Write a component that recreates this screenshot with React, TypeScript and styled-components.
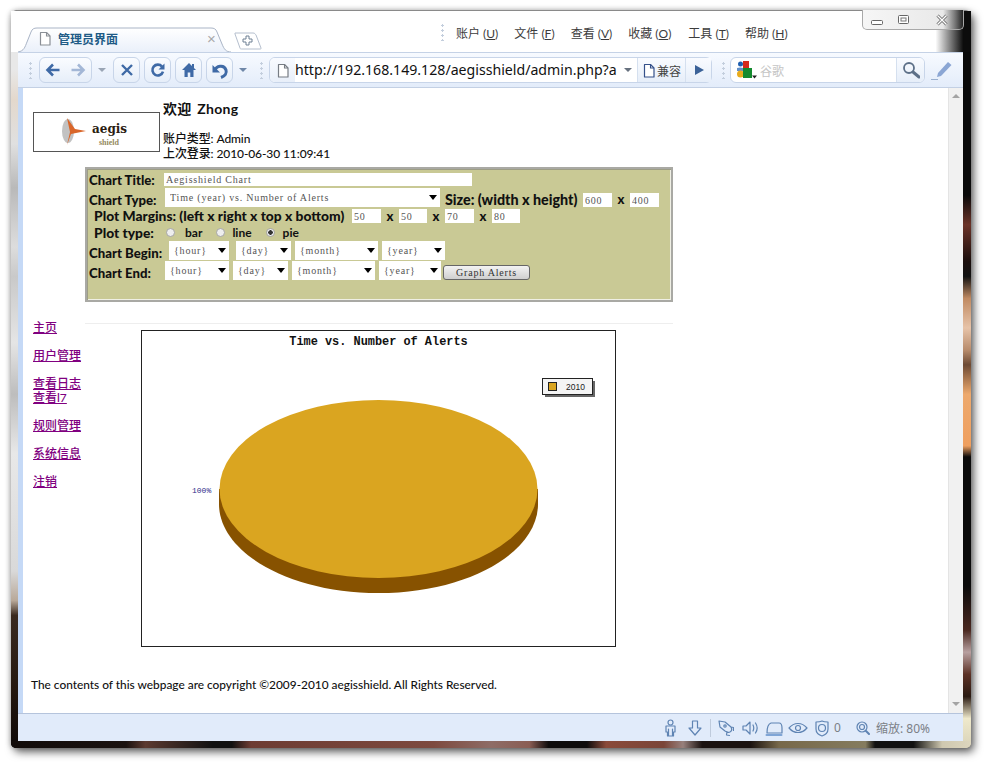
import React from "react";
import styled, { createGlobalStyle } from "styled-components";

const Global = createGlobalStyle`
  html, body { margin: 0; padding: 0; background: #fff; }
  body { font-family: "Lato", "Noto Sans CJK SC", sans-serif; }
  * { box-sizing: border-box; }
`;

const Screen = styled.div`
  width: 989px; height: 766px; padding: 10px 18px 18px 11px; overflow: hidden; background: #fff;
`;
const Win = styled.div`
  position: relative; width: 960px; height: 738px; padding: 0 8px 7px 7px; display: flex; flex-direction: column;
  border-top: 1px solid #8a8a8a; border-radius: 6px 6px 5px 5px;
  box-shadow: 3px 4px 9px rgba(0,0,0,.62), -1px 0 5px rgba(0,0,0,.2);
  background-color: #222;
  background-image:
    linear-gradient(to right, #120c0a 0, #1a1210 12%, #5c3a30 14%, #111 21%, #111 23%, #6d3c33 25%, #7d4a3f 44%, #8e6c66 50%, #8a5d54 54%, #0e0c0c 56%, #0e0c0c 60%, #8a4a3a 62%, #7a4538 68%, #97807c 70%, #1a1210 72%, #1a1210 77%, #77684a 80%, #857c5f 89%, #111 90%, #111 94%, #cfc8b0 97%, #ddd6be 100%),
    linear-gradient(to bottom, #e8e8e8 0, #e8e8e8 8%, #e3d8cc 12%, #e0e0e0 18%, #b9b9b9 24%, #ddd 32%, #c9c9c9 36%, #e5e5e5 45%, #bdbdbd 52%, #e8e8e8 60%, #d9d9d9 76%, #b8a898 80%, #3a2a20 82%, #24180f 92%, #0d0807 100%),
    linear-gradient(to bottom, #0a0a0a 0, #0a0a0a 25%, #6b3328 29%, #1a0e0c 34%, #111 36%, #c08a62 39%, #e7c3a8 43%, #b88c6c 46%, #6d4a34 48%, #eda96d 52%, #ef9f5f 59%, #0b0b0b 60.5%, #0b0b0b 78%, #4a2820 84%, #b8a0a0 87%, #5d3226 90%, #2a1a12 93%, #efe9cb 96%, #d8d2b8 100%);
  background-size: 100% 7px, 7px 100%, 8px 100%;
  background-position: left bottom, left top, right top;
  background-repeat: no-repeat;
`;

/* ---------- title strip ---------- */
const TitleStrip = styled.div`
  height: 41px; display: flex; position: relative; flex: none; margin: 0 -8px 0 -7px; padding-left: 7px;
  background: linear-gradient(to right, #fff 0, #fff 96.3%, #9a9a9a 97.5%, #0c0c0c 99.2%, #0c0c0c 100%);
`;
const Tab = styled.div`
  position: relative; width: 215px; height: 25px; margin-top: 16px; padding: 0 0 2px 20px;
  display: flex; align-items: center; flex: none;
`;
const TabShape = styled.svg`
  position: absolute; left: 0; top: 0; width: 215px; height: 25px;
`;
const TabIcon = styled.svg`
  position: relative; width: 14px; height: 15px; flex: none;
`;
const TabTitle = styled.span`
  position: relative; margin-left: 6px; font-size: 12px; font-weight: 700; color: #205b86; flex: 1;
`;
const TabClose = styled.span`
  position: relative; width: 10px; margin-right: 16px; font: 15px/15px "Liberation Sans", sans-serif; color: #a9a9a9;
`;
const NewTab = styled.svg`
  width: 28px; height: 18px; margin: 21px 0 0 1px; flex: none;
`;
const Menu = styled.div`
  display: flex; align-items: center; margin-left: 179px; height: 30px; margin-top: 6px;
`;
const VGrip = styled.i<{ $ml?: number; $h?: number }>`
  display: block; flex: none; width: 3px; height: ${p => p.$h ?? 18}px; margin-left: ${p => p.$ml ?? 0}px;
  background: radial-gradient(circle, #c3cedd 0 1px, transparent 1.2px) 0 0 / 3px 5px repeat-y;
`;
const MenuItem = styled.span<{ $ml: number }>`
  margin-left: ${p => p.$ml}px; font-size: 12px; color: #3c3c3c; white-space: nowrap;
  u { text-underline-offset: 1px; }
`;
const WinControls = styled.div`
  position: absolute; top: -1px; right: 7px; width: 102px; height: 20px; display: flex; align-items: center;
  border: 1px solid #a9a9a9; border-top: 0; border-radius: 0 0 5px 5px;
  background: linear-gradient(to right, #f6f6f6 0, #e9e9e9 80%, #777 92%, #222 100%);
`;
const WinIcon = styled.svg<{ $ml: number }>`
  width: 12px; height: 12px; flex: none; margin-left: ${p => p.$ml}px;
`;

/* ---------- toolbar ---------- */
const Toolbar = styled.div`
  height: 36px; flex: none; display: flex; align-items: center;
  border-top: 1px solid #c5d2e6; border-bottom: 1px solid #c3d0e4;
  background: linear-gradient(to bottom, #f7faff 0, #e3ecfa 100%);
`;
const NavGroup = styled.div<{ $ml?: number; $w?: number }>`
  display: flex; height: 26px; width: ${p => p.$w ?? 27}px; margin-left: ${p => p.$ml ?? 0}px; flex: none;
  align-items: center; justify-content: space-around;
  border: 1px solid #c8d5e9; border-radius: 6px; background: linear-gradient(to bottom, #fafcff, #e6eef9);
`;
const Glyph = styled.svg<{ $s?: number }>`
  width: ${p => p.$s ?? 16}px; height: ${p => p.$s ?? 16}px; flex: none; display: block;
`;
const Drop = styled.i<{ $ml: number; $c?: string }>`
  display: block; flex: none; width: 0; height: 0; margin-left: ${p => p.$ml}px;
  border: 4px solid transparent; border-top: 4px solid ${p => p.$c ?? "#9aa5b5"}; border-bottom: 0;
`;
const Address = styled.div`
  width: 443px; height: 26px; margin-left: 6px; flex: none; display: flex; align-items: center;
  border: 1px solid #c8d5e9; border-radius: 6px; background: #fff;
`;
const AddrIcon = styled.div`
  width: 25px; height: 24px; flex: none; display: flex; align-items: center; justify-content: center;
  background: linear-gradient(to bottom, #f9fbff, #e8eff9); border-radius: 5px 0 0 5px;
`;
const Url = styled.div`
  width: 322px; white-space: nowrap; flex: none;
  font: 14.15px/24px "Noto Sans", sans-serif; color: #111;
`;
const AddrBtn = styled.div<{ $w: number; $ml?: number }>`
  width: ${p => p.$w}px; height: 24px; flex: none; display: flex; align-items: center; justify-content: center; gap: 1px;
  margin-left: ${p => p.$ml ?? 0}px;
  border-left: 1px solid #d5e0ef; background: linear-gradient(to bottom, #f9fbff, #e6eef9);
  font-size: 12px; color: #444;
`;
const SearchBox = styled.div`
  width: 195px; height: 26px; margin-left: 5px; flex: none; display: flex; align-items: center;
  border: 1px solid #c8d5e9; border-radius: 6px; background: #fff;
`;
const Hint = styled.span`
  margin-left: 3px; flex: 1; font-size: 12px; color: #c4c4c4;
`;
const SearchBtn = styled.div`
  width: 28px; height: 24px; flex: none; display: flex; align-items: center; justify-content: center;
  border-left: 1px solid #d5e0ef; border-radius: 0 5px 5px 0; background: linear-gradient(to bottom, #f9fbff, #e6eef9);
`;
const Pen = styled.svg`
  width: 24px; height: 24px; margin-left: 5px; flex: none;
`;

/* ---------- content ---------- */
const Content = styled.div`
  flex: 1; min-height: 0; display: flex; background: #fff;
`;
const Edge = styled.div`
  width: 5px; flex: none; background: #c5d9f6;
`;
const Page = styled.div`
  flex: 1; min-width: 0; overflow: hidden; padding-left: 10px; color: #111; font-size: 12px;
`;
const Header = styled.div`
  display: flex; height: 79px;
`;
const LogoBox = styled.div`
  width: 127px; height: 40px; margin-top: 24px; border: 1px solid #555; flex: none;
  display: flex; align-items: center; justify-content: center;
`;
const UserInfo = styled.div`
  margin-left: 3px; padding-top: 12px; line-height: 15px;
`;
const Welcome = styled.h1`
  margin: 0 0 14px; font-size: 14px; line-height: 17px; font-weight: 700; color: #111; letter-spacing: .3px; word-spacing: 2px;
`;
const Line = styled.div`
  font-size: 12px; line-height: 15px; font-weight: 500; letter-spacing: -.1px;
`;

const fieldFont = `font: 10px "Liberation Serif", serif; letter-spacing: .8px; color: #555;`;

const ChartForm = styled.form`
  width: 588px; height: 135px; margin: 0 0 0 52px; padding: 3px 0 0 2px;
  background: #c9c995; border: 2px solid #a9a9a4;
  box-shadow: inset 1px 1px 0 #9d9d85, inset -1px -1px 0 #efefe4;
  font-weight: 900; font-size: 13.8px; color: #111;
`;
const Row = styled.div<{ $h: number; $pl?: number; $end?: boolean }>`
  display: flex; align-items: ${p => p.$end ? "flex-end" : "center"}; height: ${p => p.$h}px; padding-left: ${p => p.$pl ?? 0}px; white-space: nowrap;
  ${p => p.$end ? "> input, > span, > button { margin-bottom: 1px; }" : ""}
`;
const Label = styled.label<{ $w: number; $ml?: number; $fs?: number }>`
  flex: none; width: ${p => p.$w}px; line-height: 16px; margin-left: ${p => p.$ml ?? 0}px;
  font-size: ${p => p.$fs ?? 13.2}px;
`;
const TextBox = styled.input<{ $w: number; $ml?: number; $h?: number }>`
  width: ${p => p.$w}px; height: ${p => p.$h ?? 15}px; margin-left: ${p => p.$ml ?? 0}px; padding: 0 0 0 2px; flex: none;
  border: 0; background: #fff; outline: 0;
  ${fieldFont}
`;
const Times = styled.span<{ $w: number }>`
  width: ${p => p.$w}px; text-align: center; flex: none; font-size: 13px; line-height: 15px;
`;
const SelectWrap = styled.span<{ $w: number; $ml?: number; $h?: number }>`
  position: relative; display: block; flex: none; width: ${p => p.$w}px; height: ${p => p.$h ?? 19}px; margin-left: ${p => p.$ml ?? 0}px;
  &::after {
    content: ""; position: absolute; right: 3px; top: 50%; margin-top: -3px; width: 0; height: 0;
    border: 4px solid transparent; border-top: 5px solid #000; border-bottom: 0;
  }
`;
const Select = styled.select`
  appearance: none; display: block; width: 100%; height: 100%; padding: 0 0 0 5px; border: 0; border-radius: 0; background: #fff; outline: 0;
  ${fieldFont}
`;
const Radio = styled.input<{ $ml: number }>`
  appearance: none; flex: none; width: 9px; height: 9px; margin: 0 0 0 ${p => p.$ml}px;
  border: 1px solid #a5a5a5; border-radius: 50%; background: #eee;
  &:checked { background: radial-gradient(circle, #333 0 2px, #eee 2.5px); }
`;
const RadioText = styled.span<{ $ml: number }>`
  margin-left: ${p => p.$ml}px; font-weight: 700; font-size: 12px; flex: none;
`;
const GraphBtn = styled.button`
  width: 87px; height: 15px; margin-left: 2px; padding: 0; flex: none; border: 1px solid #666; border-radius: 3px;
  background: linear-gradient(to bottom, #f3f3f3, #cfcfcf);
  ${fieldFont}
  color: #333;
`;

const Body = styled.div`
  display: flex; margin-top: 19px;
`;
const SideNav = styled.nav`
  width: 52px; flex: none; display: flex; flex-direction: column; gap: 14px;
`;
const NavBlock = styled.div`
  display: flex; flex-direction: column;
`;
const NavLink = styled.a`
  font-size: 12px; line-height: 14px; color: #800080; text-decoration: underline; white-space: nowrap; font-weight: 500;
`;
const Main = styled.div`
  width: 588px; flex: none; padding-top: 2px;
`;
const Rule = styled.div`
  height: 1px; background: #eee;
`;
const ChartFrame = styled.svg`
  display: block; width: 475px; height: 317px; margin: 6px 0 0 56px;
`;
const Footer = styled.div`
  margin: 31px 0 0 -2px; font-size: 11.87px; line-height: 14px; font-weight: 500; white-space: nowrap; color: #111;
`;
const Scrollbar = styled.div`
  width: 15px; flex: none; display: flex; flex-direction: column; justify-content: space-between; align-items: center;
  padding: 6px 0 7px; background: #f1f1f1; border-left: 1px solid #e4e4e4;
`;
const ScrollUp = styled.i`
  width: 0; height: 0; border: 4px solid transparent; border-bottom: 4px solid #a4a4a4; border-top: 0;
`;
const ScrollDown = styled.i`
  width: 0; height: 0; border: 4px solid transparent; border-top: 4px solid #a4a4a4; border-bottom: 0;
`;

/* ---------- status ---------- */
const Status = styled.div`
  height: 28px; flex: none; display: flex; align-items: center; justify-content: flex-end; padding-right: 33px;
  border-top: 1px solid #b5c4dc; background: #e1ebfa; color: #7b7f86; font-size: 12px;
`;
const StatusIcon = styled.svg<{ $ml: number; $w?: number }>`
  width: ${p => p.$w ?? 16}px; height: 18px; margin-left: ${p => p.$ml}px; flex: none;
`;
const StatusDivider = styled.i<{ $ml: number }>`
  width: 1px; height: 18px; background: #bfcbdc; margin-left: ${p => p.$ml}px; flex: none;
`;
const StatusText = styled.span<{ $ml: number }>`
  margin-left: ${p => p.$ml}px; white-space: nowrap; flex: none; font-family: "Noto Sans", "Noto Sans CJK SC", sans-serif;
`;

const pageIcon = (c: string) => (
  <>
    <path d="M2.500 1.500h6l3.500 3.500v9H2.500z" fill="#fff" stroke={c} strokeWidth="1.200" strokeLinejoin="round" />
    <path d="M8.500 1.500v3.500h3.500" fill="none" stroke={c} strokeWidth="1.100" />
  </>
);
const blue = "#3f6aa6";

const Stroke: React.FC<React.PropsWithChildren> = ({ children }) => (
  <g fill="none" stroke="#5f84b3" strokeWidth="1.200" strokeLinecap="round" strokeLinejoin="round">{children}</g>
);

const DateSelect = ({ label, w, ml, h }: { label: string; w: number; ml?: number; h?: number }) => (
  <SelectWrap $w={w} $ml={ml} $h={h}>
    <Select defaultValue={label}><option>{label}</option></Select>
  </SelectWrap>
);

export default function App() {
  return (
    <Screen>
      <Global />
      <Win>
        <TitleStrip>
          <Tab>
            <TabShape viewBox="0 0 215 25">
              <defs>
                <linearGradient id="tabfill" x1="0" y1="0" x2="0" y2="1">
                  <stop offset="0" stopColor="#ffffff" />
                  <stop offset="1" stopColor="#eaf0fa" />
                </linearGradient>
              </defs>
              <path d="M0 25c6-1 7-5 9-10l4-10c1-3 3-4 6-4h174c3 0 5 1 6 4l5 12c2 5 4 8 9 8" fill="url(#tabfill)" stroke="#a9b4c6" strokeWidth="1" />
            </TabShape>
            <TabIcon viewBox="0 0 14 15">{pageIcon("#8a8f96")}</TabIcon>
            <TabTitle>管理员界面</TabTitle>
            <TabClose>×</TabClose>
          </Tab>
          <NewTab viewBox="0 0 28 18">
            <path d="M1 1h18c2 0 2 1 3 2l5 13c0 1 0 1-1 1H8c-1 0-2 0-2-1L1 2z" fill="#fff" stroke="#b5bfce" />
            <path d="M12 4h3v3h3v3h-3v3h-3v-3H9V7h3z" fill="#fff" stroke="#6f8094" strokeLinejoin="round" />
          </NewTab>
          <Menu>
            <VGrip />
            <MenuItem $ml={12}>账户 (<u>U</u>)</MenuItem>
            <MenuItem $ml={16}>文件 (<u>F</u>)</MenuItem>
            <MenuItem $ml={16}>查看 (<u>V</u>)</MenuItem>
            <MenuItem $ml={16}>收藏 (<u>O</u>)</MenuItem>
            <MenuItem $ml={17}>工具 (<u>T</u>)</MenuItem>
            <MenuItem $ml={16}>帮助 (<u>H</u>)</MenuItem>
          </Menu>
          <WinControls>
            <WinIcon $ml={8} viewBox="0 0 12 12"><rect x="0.500" y="6.500" width="11" height="4" rx="1" fill="#fff" stroke="#666" /></WinIcon>
            <WinIcon $ml={15} viewBox="0 0 12 12"><rect x="0.500" y="1.500" width="10" height="8" rx="1" fill="#fff" stroke="#666" /><rect x="3" y="4" width="5" height="3" fill="none" stroke="#777" /></WinIcon>
            <WinIcon $ml={26} viewBox="0 0 12 12"><path d="M1.500 1.500l9 9m0-9l-9 9" stroke="#666" strokeWidth="3" /><path d="M1.500 1.500l9 9m0-9l-9 9" stroke="#fff" strokeWidth="1.400" /></WinIcon>
          </WinControls>
        </TitleStrip>

        <Toolbar>
          <VGrip $ml={11} $h={18} />
          <NavGroup $ml={7} $w={53}>
            <Glyph viewBox="0 0 16 16"><path d="M8 2.500L2.500 8 8 13.500M3 8h11.500" fill="none" stroke={blue} strokeWidth="2.600" /></Glyph>
            <Glyph viewBox="0 0 16 16"><path d="M8 2.500L13.500 8 8 13.500M13 8H1.500" fill="none" stroke="#a3b7d6" strokeWidth="2.600" /></Glyph>
          </NavGroup>
          <Drop $ml={6} />
          <NavGroup $ml={7}>
            <Glyph viewBox="0 0 16 16"><path d="M3 3l10 10M13 3L3 13" stroke={blue} strokeWidth="2.400" /></Glyph>
          </NavGroup>
          <NavGroup $ml={4}>
            <Glyph viewBox="0 0 16 16"><path d="M13 9.600A5.400 5.400 0 1 1 12 4.600" fill="none" stroke={blue} strokeWidth="2.600" /><path d="M14.500 1.500v6h-6z" fill={blue} /></Glyph>
          </NavGroup>
          <NavGroup $ml={4}>
            <Glyph viewBox="0 0 16 16"><path d="M8 1L1 8h2.500v7h3.200v-4.500h2.600V15h3.200V8H15l-2-2V2h-2v2z" fill={blue} /></Glyph>
          </NavGroup>
          <NavGroup $ml={4}>
            <Glyph $s={18} viewBox="0 0 18 18"><path d="M4 9.500C5 5 13 3 15 9c1 3-1 6-5 7.500" fill="none" stroke={blue} strokeWidth="3" /><path d="M1.500 4v7.500H9z" fill={blue} /></Glyph>
          </NavGroup>
          <Drop $ml={6} $c="#6f87a8" />
          <VGrip $ml={13} $h={18} />
          <Address>
            <AddrIcon><TabIcon viewBox="0 0 14 15">{pageIcon("#777c84")}</TabIcon></AddrIcon>
            <Url>http://192.168.149.128/aegisshield/admin.php?a</Url>
            <Drop $ml={7} $c="#67717f" />
            <AddrBtn $w={48} $ml={5}>
              <TabIcon viewBox="0 0 14 15">{pageIcon("#34508a")}</TabIcon>兼容
            </AddrBtn>
            <AddrBtn $w={26}>
              <Glyph $s={14} viewBox="0 0 14 14"><path d="M3 2l9 5-9 5z" fill="#3b6298" /></Glyph>
            </AddrBtn>
          </Address>
          <VGrip $ml={10} $h={18} />
          <SearchBox>
            <Glyph $s={26} viewBox="0 0 26 24">
              <rect x="12" y="3" width="6" height="7" fill="#d42a1c" />
              <circle cx="9.500" cy="6" r="2.500" fill="#1f5fb0" />
              <path d="M6 10l3-.5 3 .5v3H6z" fill="#1f5fb0" opacity=".7" />
              <ellipse cx="9.500" cy="16" rx="3.500" ry="3.500" fill="#e8ab1c" />
              <rect x="12" y="10" width="9" height="10" fill="#138a2e" />
              <path d="M21 17.500h5l-2.500 3z" fill="#222" />
            </Glyph>
            <Hint>谷歌</Hint>
            <SearchBtn>
              <Glyph $s={18} viewBox="0 0 18 18"><circle cx="7" cy="7" r="5" fill="none" stroke="#5d7088" strokeWidth="1.800" /><path d="M11 11l6 5" stroke="#5d7088" strokeWidth="3" strokeLinecap="round" /></Glyph>
            </SearchBtn>
          </SearchBox>
          <Pen viewBox="0 0 24 24">
            <path d="M8 15L18 4l3.500 3L11 18l-4 1z" fill="#8ba6d4" />
            <path d="M1 21.500h7" stroke="#9ab0cf" strokeWidth="1" />
          </Pen>
        </Toolbar>

        <Content>
          <Edge />
          <Page>
            <Header>
              <LogoBox>
                <svg width="72" height="32" viewBox="0 0 72 32">
                  <ellipse cx="7" cy="15" rx="6" ry="12" fill="#c2c2c2" />
                  <path d="M6 2l8 11 11 2-15 3-4 11 3-13z" fill="#d9662a" />
                  <text x="31" y="17" fontFamily="DejaVu Serif, serif" fontSize="12" fontWeight="700" fill="#2b1c12">aegis</text>
                  <text x="38" y="29" fontFamily="Liberation Serif, serif" fontSize="8" fontWeight="700" fill="#948a60">shield</text>
                </svg>
              </LogoBox>
              <UserInfo>
                <Welcome>欢迎 Zhong</Welcome>
                <Line>账户类型: Admin</Line>
                <Line>上次登录: 2010-06-30 11:09:41</Line>
              </UserInfo>
            </Header>

            <ChartForm>
              <Row $h={15}>
                <Label $w={75}>Chart Title:</Label>
                <TextBox $w={308} $h={13} defaultValue="Aegisshield Chart" />
              </Row>
              <Row $h={21} $end>
                <Label $w={76}>Chart Type:</Label>
                <DateSelect label="Time (year) vs. Number of Alerts" w={275} h={19} />
                <Label $w={138} $ml={5} $fs={14.3}>Size: (width x height)</Label>
                <TextBox $w={29} $h={14} defaultValue="600" />
                <Times $w={18}>x</Times>
                <TextBox $w={29} $h={14} defaultValue="400" />
              </Row>
              <Row $h={16} $pl={5}>
                <Label $w={258} $fs={13.8}>Plot Margins: (left x right x top x bottom)</Label>
                <TextBox $w={29} $h={14} defaultValue="50" />
                <Times $w={18}>x</Times>
                <TextBox $w={28} $h={14} defaultValue="50" />
                <Times $w={18}>x</Times>
                <TextBox $w={29} $h={14} defaultValue="70" />
                <Times $w={18}>x</Times>
                <TextBox $w={28} $h={14} defaultValue="80" />
              </Row>
              <Row $h={17} $pl={5}>
                <Label $w={72} $fs={13.8}>Plot type:</Label>
                <Radio $ml={0} type="radio" name="plot" />
                <RadioText $ml={10}>bar</RadioText>
                <Radio $ml={14} type="radio" name="plot" />
                <RadioText $ml={7}>line</RadioText>
                <Radio $ml={14} type="radio" name="plot" defaultChecked />
                <RadioText $ml={8}>pie</RadioText>
              </Row>
              <Row $h={20} $end>
                <Label $w={80}>Chart Begin:</Label>
                <DateSelect label="{hour}" w={60} />
                <DateSelect label="{day}" w={55} ml={7} />
                <DateSelect label="{month}" w={83} ml={4} />
                <DateSelect label="{year}" w={63} ml={4} />
              </Row>
              <Row $h={20} $end>
                <Label $w={76}>Chart End:</Label>
                <DateSelect label="{hour}" w={64} />
                <DateSelect label="{day}" w={55} ml={4} />
                <DateSelect label="{month}" w={83} ml={4} />
                <DateSelect label="{year}" w={62} ml={4} />
                <GraphBtn type="button">Graph Alerts</GraphBtn>
              </Row>
            </ChartForm>

            <Body>
              <SideNav>
                <NavLink href="#">主页</NavLink>
                <NavLink href="#">用户管理</NavLink>
                <NavBlock>
                  <NavLink href="#">查看日志</NavLink>
                  <NavLink href="#">查看l7</NavLink>
                </NavBlock>
                <NavLink href="#">规则管理</NavLink>
                <NavLink href="#">系统信息</NavLink>
                <NavLink href="#">注销</NavLink>
              </SideNav>
              <Main>
                <Rule />
                <ChartFrame viewBox="0 0 475 317">
                  <rect x="0.500" y="0.500" width="474" height="316" fill="#fff" stroke="#222" />
                  <text x="237.500" y="15" textAnchor="middle" fontFamily="Liberation Mono, monospace" fontSize="11.900" fontWeight="700" fill="#111">Time vs. Number of Alerts</text>
                  <rect x="404" y="51" width="50" height="16" fill="#666" />
                  <rect x="401.500" y="48.500" width="50" height="16" fill="#f4f4f4" stroke="#222" />
                  <rect x="407.500" y="52.500" width="8" height="8" fill="#daa520" stroke="#222" />
                  <text x="425" y="60" fontFamily="Liberation Sans, sans-serif" fontSize="8.500" fill="#222">2010</text>
                  <path d="M78 159v15c0 49 71 89 159.500 89S397 223 397 174v-15z" fill="#875200" />
                  <ellipse cx="237.500" cy="159" rx="159" ry="89" fill="#daa520" />
                  <text x="51" y="163" fontFamily="Liberation Mono, monospace" fontSize="8" fill="#2d2d8a">100%</text>
                </ChartFrame>
              </Main>
            </Body>
            <Footer>The contents of this webpage are copyright ©2009-2010 aegisshield. All Rights Reserved.</Footer>
          </Page>
          <Scrollbar><ScrollUp /><ScrollDown /></Scrollbar>
        </Content>

        <Status>
          <StatusIcon $ml={0} $w={13} viewBox="0 0 13 18"><Stroke><circle cx="6.500" cy="3.500" r="2.500" /><path d="M2 7h9v6H9.500v4h-6v-4H2zM4.500 10v7M8.500 10v7" /></Stroke></StatusIcon>
          <StatusIcon $ml={11} $w={14} viewBox="0 0 14 18"><Stroke><path d="M4.500 2h5v7H13l-6 7-6-7h3.500z" /></Stroke></StatusIcon>
          <StatusDivider $ml={8} />
          <StatusIcon $ml={7} viewBox="0 0 16 18"><Stroke><path d="M1 2l6 1 6 5c1 2 1 4-1 5-2 1-3 0-5-1L2 8zM9 12.500l-.5 3.500 3 .5M13 8l2.500.5v3" /><circle cx="7" cy="7" r="1.200" /></Stroke></StatusIcon>
          <StatusIcon $ml={8} viewBox="0 0 16 18"><Stroke><path d="M1 7v4h3l4 4V3L4 7zM11 6c1 2 1 4 0 6M13.500 4c2 3 2 7 0 10" /></Stroke></StatusIcon>
          <StatusIcon $ml={7} $w={18} viewBox="0 0 18 18"><Stroke><path d="M2 14C2 8 3 5 6 4h8c2 0 3 2 3 5v5z" /></Stroke><path d="M1.500 16h15" stroke="#7fa5d6" strokeWidth="2" strokeLinecap="round" /></StatusIcon>
          <StatusIcon $ml={5} $w={20} viewBox="0 0 20 18"><Stroke><path d="M1 9c5-6 13-6 18 0-5 6-13 6-18 0z" /><circle cx="10" cy="9" r="2.500" /></Stroke></StatusIcon>
          <StatusIcon $ml={7} $w={14} viewBox="0 0 14 18"><Stroke><path d="M1 3c4 0 6-1 6-1s2 1 6 1v7c0 4-3 6-6 7-3-1-6-3-6-7z" /><circle cx="7" cy="9" r="3.500" /></Stroke></StatusIcon>
          <StatusText $ml={5}>0</StatusText>
          <StatusIcon $ml={15} $w={14} viewBox="0 0 14 18"><Stroke><circle cx="6" cy="8" r="5" /><circle cx="6" cy="8" r="2.500" /><path d="M10 12l3 3" strokeWidth="2" /></Stroke></StatusIcon>
          <StatusText $ml={6}>缩放: 80%</StatusText>
        </Status>
      </Win>
    </Screen>
  );
}
